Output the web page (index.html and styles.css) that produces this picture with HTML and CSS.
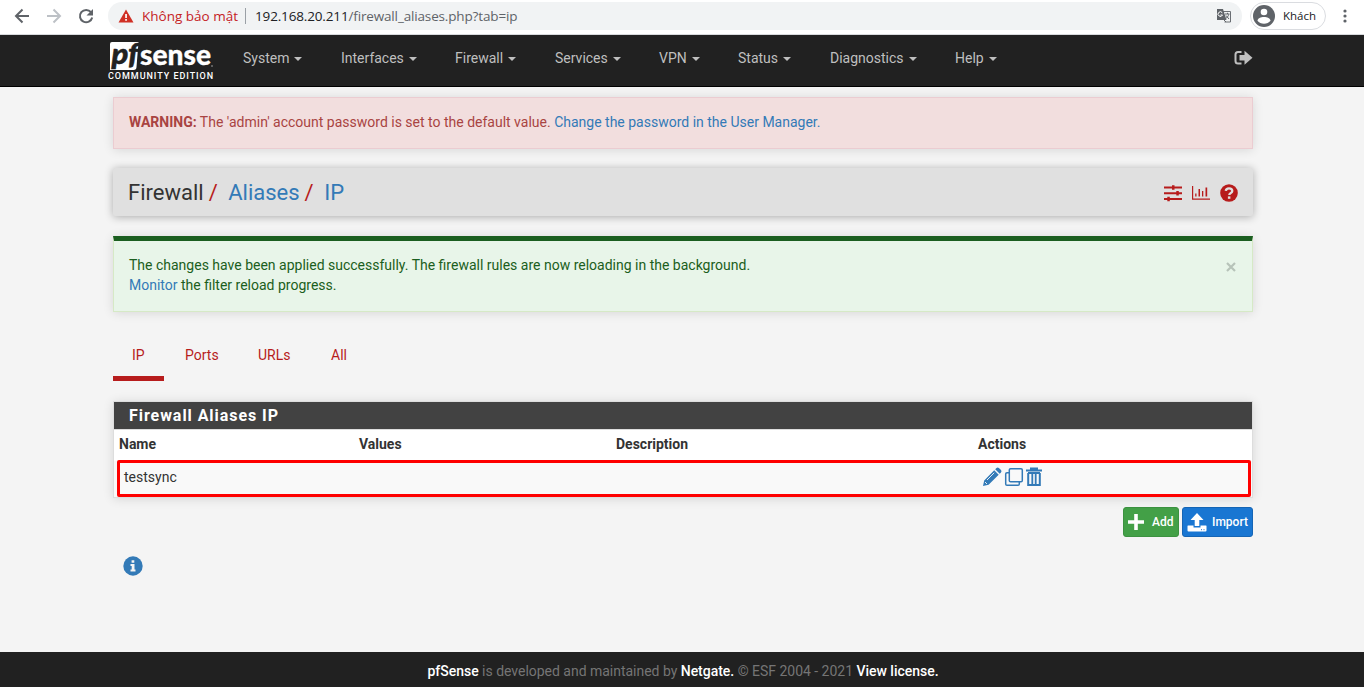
FILE: index.html
```html
<!DOCTYPE html>
<html lang="vi">
<head>
<meta charset="utf-8">
<title>Firewall: Aliases: IP</title>
<link rel="stylesheet" href="styles.css">
</head>
<body>
<div class="browser">
  <svg class="tools" width="96" height="24" viewBox="0 0 96 24" fill="none" stroke="#5f6368" stroke-width="2">
    <path d="M29 12H16.500M22.500 5.500L16 12l6.500 6.500"/>
    <path stroke="#bdc1c6" d="M47 12h12.500M53.500 5.500L60 12l-6.500 6.500"/>
    <path d="M91 8.200A6.200 6.200 0 1 0 92.200 13.500"/><path d="M93 5v6.500h-6.500z" fill="#5f6368" stroke="none"/>
  </svg>
  <div class="address">
    <svg width="16" height="14" viewBox="0 0 16 14"><path d="M8 .5L15.500 13.500H.5z" fill="#d03025"/><path d="M7.200 5h1.700v4H7.200zM7.200 10h1.700v1.700H7.200z" fill="#fff"/></svg>
    <span class="insecure">Không bảo mật</span><span class="divider"></span>
    <span class="url"><b>192.168.20.211</b>/firewall_aliases.php?tab=ip</span>
    <svg class="translate" width="16" height="16" viewBox="0 0 16 16"><path d="M6 3.500h8.500v10.500H8.500" fill="none" stroke="#6a6e73"/><path d="M1 1h6l3.500 11H1z" fill="#5f6368"/><path d="M6.300 4.800A2.300 2.300 0 1 0 6.500 7H4.500" fill="none" stroke="#fff"/><path d="M9 6h4.500M11.500 4.800V6M12.800 6.300c-.5 2-1.800 3.300-3 4.300M10 7.500l3 3.500M8 12l2 2" fill="none" stroke="#5f6368"/></svg>
  </div>
  <div class="profile">
    <svg width="22" height="22" viewBox="0 0 22 22"><circle cx="11" cy="11" r="11" fill="#5f6368"/><circle cx="11" cy="7" r="3.300" fill="#fff"/><path d="M4.500 15.800c0-2.500 3.300-3.800 6.500-3.800s6.500 1.300 6.500 3.800c-1.500 1.900-3.900 2.900-6.500 2.900s-5-1-6.500-2.900z" fill="#fff"/></svg>
    <span>Khách</span>
  </div>
  <svg class="kebab" width="4" height="14" viewBox="0 0 4 14" fill="#5f6368"><circle cx="2" cy="2" r="1.600"/><circle cx="2" cy="7" r="1.600"/><circle cx="2" cy="12" r="1.600"/></svg>
</div>
<header class="navbar">
  <div class="brand">
    <svg class="logo" width="110" height="42" viewBox="0 -7 110 42">
      <path d="M4 1H30.500L28.500 26q0 3-3 3H2V3q0-2 2-2z" fill="#fff"/>
      <text x="3.500" y="22.500" class="logo-pf" textLength="27" lengthAdjust="spacingAndGlyphs">pf</text>
      <text x="32" y="24" class="logo-sense" textLength="71" lengthAdjust="spacingAndGlyphs">sense</text>
      <circle cx="104" cy="25" r=".8" fill="#aaa"/>
    </svg>
    <span class="edition">COMMUNITY EDITION</span>
  </div>
  <nav class="menu">
    <a class="system">System<i></i></a><a class="interfaces">Interfaces<i></i></a><a class="firewall">Firewall<i></i></a><a class="services">Services<i></i></a><a class="vpn">VPN<i></i></a><a class="status">Status<i></i></a><a class="diagnostics">Diagnostics<i></i></a><a>Help<i></i></a>
  </nav>
  <svg class="logout" width="19" height="16" viewBox="0 0 19 16"><path d="M7.500 2H4Q1.500 2 1.500 4.500v6.500Q1.500 13.500 4 13.500h3.500" fill="none" stroke="#bfbfbf" stroke-width="2"/><path d="M5.500 5H10.500V.8L18.500 7.800l-8 7v-4.300h-5z" fill="#bfbfbf"/></svg>
</header>
<main class="container">
  <div class="warning"><b>WARNING:</b> The 'admin' account password is set to the default value. <a>Change the password in the User Manager.</a></div>
  <div class="heading">
    <h1><span>Firewall</span><em>/</em><a>Aliases</a><em>/</em><a>IP</a></h1>
    <div class="heading-icons">
      <svg width="18" height="18" viewBox="0 0 18 18" fill="#b71c1c"><path d="M0 2.500h18v2H0zM0 8.200h18v2H0zM0 14h18v2H0zM8 1.200h2.500v4.600H8zM12.300 6.900h2.500v4.600h-2.500zM3.300 12.700h2.500v4.600H3.300z"/></svg>
      <svg width="18" height="18" viewBox="0 0 18 18" fill="#b71c1c"><path d="M0 2h1.200v12.500H18v1.200H0zM3.200 9.500h1.300v3H3.200zM6.500 5h1.500v7.500H6.500zM10 7h1.300v5.500H10zM13.500 3.500h1.700v9h-1.700z"/></svg>
      <svg width="18" height="18" viewBox="0 0 18 18"><circle cx="9" cy="9" r="8.800" fill="#b71c1c"/><path d="M5.800 6.900Q6 4.300 9 4.300q3.300 0 3.300 2.700 0 1.300-1.800 2.200-1.200.6-1.200 1.700" fill="none" stroke="#e0e0e0" stroke-width="2.300"/><path d="M7.900 12.400h2.500v2.400H7.900z" fill="#e0e0e0"/></svg>
    </div>
  </div>
  <div class="success">
    <p>The changes have been applied successfully. The firewall rules are now reloading in the background.<br><a>Monitor</a> the filter reload progress.</p>
    <svg width="10" height="10" viewBox="0 0 10 10"><path d="M1 1l8 8M9 1L1 9" stroke="#b7c3b9" stroke-width="2.200"/></svg>
  </div>
  <nav class="tabs"><a class="active">IP</a><a class="ports">Ports</a><a class="urls">URLs</a><a>All</a></nav>
  <section class="panel">
    <h2>Firewall Aliases IP</h2>
    <div class="row head"><span>Name</span><span>Values</span><span>Description</span><span>Actions</span></div>
    <div class="row entry"><span>testsync</span><span></span><span></span>
      <span class="actions">
        <svg width="20" height="20" viewBox="0 0 20 20"><path d="M1 19l1.200-5.600L12.200 3.300l4.500 4.500L6.600 17.800zM13.200 2.300L14.500 1q1.200-1 2.400 0l2.100 2.100q1 1.200 0 2.400l-1.300 1.300z" fill="#337ab7"/><path d="M5 13l7.200-7.200M3 15l2 2" stroke="#f9f9f9" stroke-width=".9"/></svg>
        <svg width="20" height="20" viewBox="0 0 20 20" fill="none" stroke="#337ab7" stroke-width="1.500"><rect x="5.300" y="1.800" width="13" height="13" rx="1.300"/><path d="M5 5.800H3Q1.700 5.800 1.700 7v10q0 1.300 1.300 1.300h11q1.300 0 1.300-1.300v-2"/></svg>
        <svg width="18" height="20" viewBox="0 0 18 20" fill="none" stroke="#337ab7" stroke-width="2"><path d="M1 3.500h16M6 3V1.500h6V3M3.200 6v12h11.600V6M3 6h12" /><path d="M7.300 6v12M10.700 6v12" stroke-width="1.800"/></svg>
      </span>
    </div>
    <div class="marker"></div>
  </section>
  <div class="buttons">
    <a class="add"><svg width="16" height="16" viewBox="0 0 16 16"><path d="M8 0v16M0 8h16" stroke="#fff" stroke-width="3.600"/></svg>Add</a>
    <a class="import"><svg width="20" height="19" viewBox="0 0 20 19"><path d="M10 0l6.500 7H12.300v6H7.700V7H3.500zM1 12.500h5.500v2h7v-2H19q.5 0 .5.500v4.500q0 1-1 1h-17q-1 0-1-1V13q0-.5.500-.5z" fill="#fff"/><path d="M14 16.700h1M16.500 16.700h1" stroke="#1976d2"/></svg>Import</a>
  </div>
  <svg class="info" width="20" height="20" viewBox="0 0 20 20"><circle cx="10" cy="10" r="9.700" fill="#337ab7"/><path d="M8.600 4.300h2.700v2.500H8.600zM7.500 8h4v5.500h1v2h-5v-2h1.200V10H7.500z" fill="#f4f4f4"/></svg>
</main>
<footer><p><b>pfSense</b> is developed and maintained by <b>Netgate.</b> © ESF 2004 - 2021 <b>View license.</b></p></footer>
</body>
</html>
```
FILE: styles.css
```css
* { box-sizing: border-box; }
body { margin: 0; height: 687px; overflow: hidden; display: flex; flex-direction: column; background: #f4f4f4; color: #333; font: 14px/20px Roboto, sans-serif; }
svg { display: block; flex: none; }
a { color: #337ab7; }
.browser { height: 35px; flex: none; background: #fff; border-bottom: 1px solid #d8dadd; display: flex; align-items: flex-start; font-family: "Open Sans", sans-serif; }
.tools { margin: 4px 12px 0 0; }
.address { width: 1134px; height: 28px; margin-top: 2px; border-radius: 14px; background: #f1f3f4; display: flex; align-items: center; padding: 0 10px; font-size: 13.5px; white-space: nowrap; }
.insecure { color: #c5221f; margin-left: 8px; width: 96px; }
.divider { width: 1px; height: 16px; background: #9aa0a6; margin: 0 9px 0 7px; }
.url { color: #5f6368; letter-spacing: -.15px; }
.url b { color: #202124; font-weight: 400; }
.translate { margin-left: auto; }
.profile { width: 76px; height: 28px; margin: 2px 0 0 8px; border: 1px solid #dadce0; border-radius: 14px; display: flex; align-items: center; padding-left: 2px; gap: 8px; color: #202124; font-size: 11.5px; }
.kebab { margin: 9px 0 0 17px; }
.navbar { height: 52px; flex: none; background: #212121; border-bottom: 1px solid #000; padding-left: 108px; display: flex; align-items: flex-start; }
.brand { width: 135px; }
.logo { margin: -1px 0 -5px; }
.logo-pf { font: italic 900 29px Lato, sans-serif; fill: #212121; stroke: #212121; stroke-width: .5px; }
.logo-sense { font: 900 29px Lato, sans-serif; fill: #fff; stroke: #fff; stroke-width: .3px; }
.edition { display: block; color: #fff; font-size: 9px; font-weight: 500; line-height: 10px; letter-spacing: .96px; white-space: nowrap; }
.menu { display: flex; width: 991px; padding-top: 13px; }
.menu a { color: #bfbfbf; display: flex; align-items: center; white-space: nowrap; }
.menu i { border: 4px solid transparent; border-top-color: #bfbfbf; border-bottom: 0; margin: 2px 0 0 5px; }
.system { width: 98px; }
.interfaces { width: 114px; }
.firewall { width: 100px; }
.services { width: 104px; }
.vpn { width: 79px; }
.status { width: 92px; }
.diagnostics { width: 125px; }
.logout { margin-top: 15px; }
.container { width: 1140px; margin: 10px 0 0 113px; flex: 1; }
.warning { height: 52px; padding: 14px 15px; background: #f2dede; border: 1px solid #ebccd1; color: #a94442; box-shadow: 0 1px 10px rgba(0,0,0,.12); }
.heading { height: 48px; margin-top: 19px; padding: 0 15px; background: #e0e0e0; display: flex; align-items: center; justify-content: space-between; box-shadow: 0 1px 8px rgba(0,0,0,.3); border-radius: 2px; }
h1 { margin: 2px 0 0; font-size: 22px; font-weight: 400; line-height: 30px; }
h1 em { color: #b71c1c; font-style: normal; margin: 0 10.500px 0 5px; }
.heading-icons { display: flex; gap: 10px; padding-top: 2px; }
.success { height: 76px; margin-top: 20px; padding: 14px 16px 0 15px; background: #e8f5e9; border: 1px solid #d6e9c6; border-top: 5px solid #1b5e20; color: #1b5e20; display: flex; justify-content: space-between; box-shadow: 0 1px 10px rgba(0,0,0,.12); }
.success p { margin: 0; }
.success svg { margin-top: 7px; }
.tabs { height: 49px; margin-top: 20px; display: flex; }
.tabs a { color: #b71c1c; padding-top: 13px; }
.tabs .active { width: 51px; padding-left: 19px; border-bottom: 5px solid #b71c1c; margin-right: 21px; }
.ports { width: 73px; }
.urls { width: 73px; }
.panel { position: relative; height: 97px; margin-top: 20px; background: #fff; border: 1px solid #ddd; box-shadow: 0 1px 10px rgba(0,0,0,.12); }
h2 { height: 27px; margin: 0; padding-left: 15px; background: #424242; color: #fff; font-size: 16px; line-height: 27px; font-weight: 700; letter-spacing: .95px; }
.row { display: grid; grid-template-columns: 240px 257px 362px 1fr; padding-left: 5px; }
.head { height: 32px; border-top: 1px solid #ddd; padding-top: 4px; font-weight: 700; }
.entry { height: 36px; background: #f9f9f9; padding: 6px 0 0 10px; }
.actions { display: flex; gap: 2px; align-items: center; height: 20px; margin-left: -1px; }
.actions svg:last-child { margin-left: -1px; }
.marker { position: absolute; left: 3px; top: 58px; width: 1134px; height: 37px; border: 3px solid #f00; border-radius: 2px; }
.buttons { display: flex; justify-content: flex-end; gap: 3px; margin-top: 9px; }
.buttons a { height: 30px; color: #fff; border-radius: 3px; display: flex; align-items: center; font-size: 12px; font-weight: 500; }
.add { width: 56px; background: #43a047; border: 1px solid #3c9240; padding-left: 4px; gap: 8px; }
.import { width: 71px; background: #1976d2; border: 1px solid #1565b5; padding-left: 4px; gap: 5px; }
.info { margin: 19px 0 0 10px; }
footer { height: 35px; flex: none; background: #212121; color: #757575; text-align: center; }
footer p { margin: 9px 0 0 2px; letter-spacing: -.02px; }
footer b { color: #fff; font-weight: 500; }
```
